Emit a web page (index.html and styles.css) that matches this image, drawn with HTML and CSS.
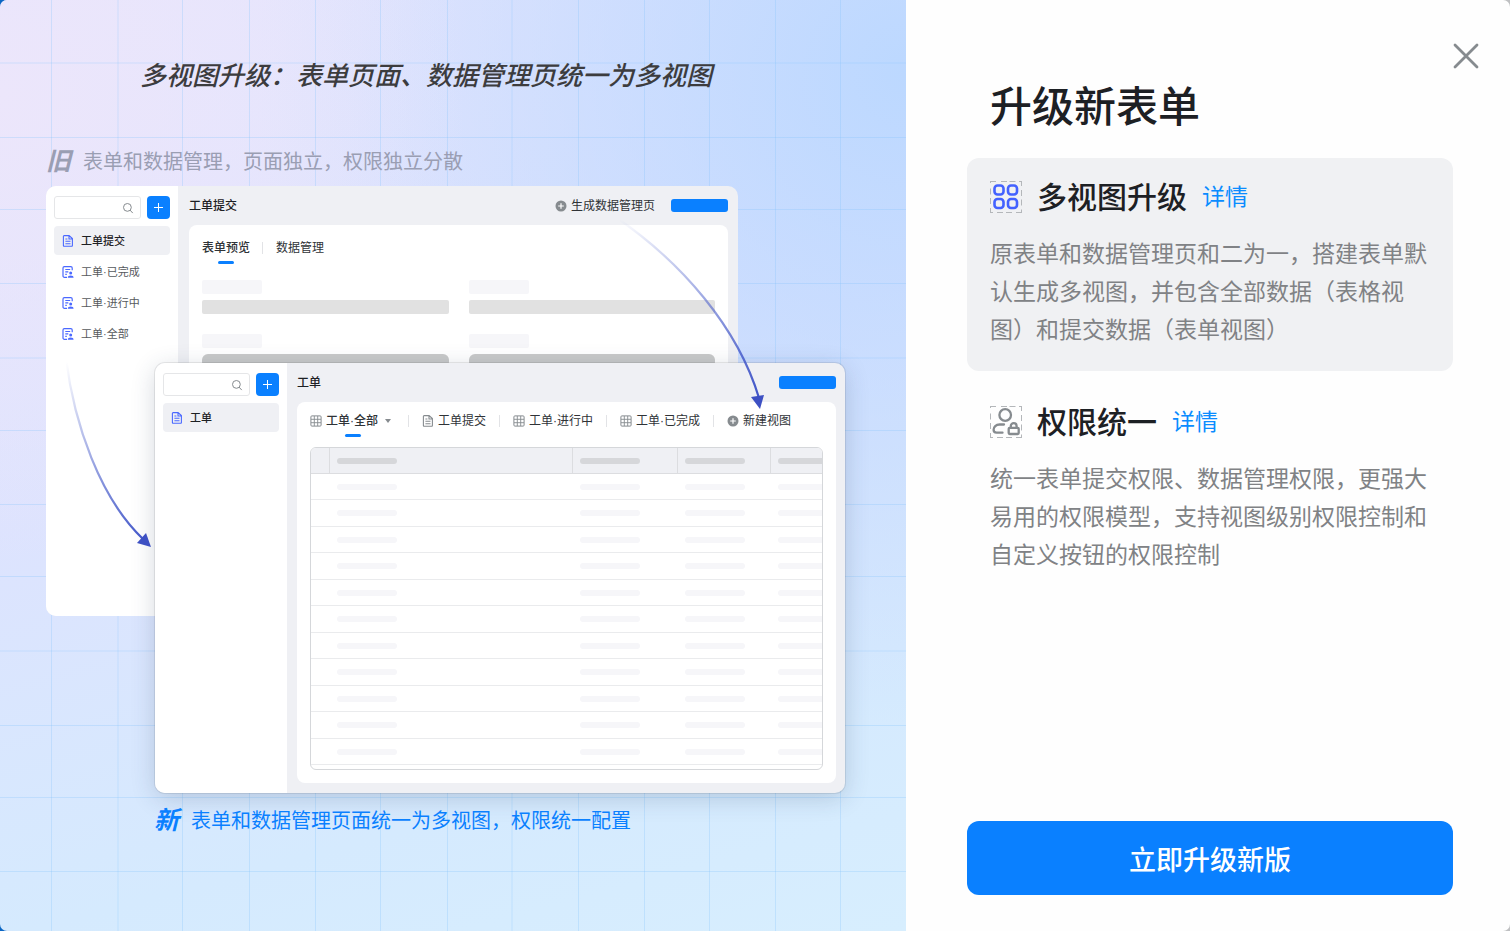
FILE: index.html
```
<!DOCTYPE html>
<html lang="zh-CN">
<head>
  <meta charset="UTF-8">
  <meta name="viewport" content="width=device-width, initial-scale=1.0">
  <title>升级新表单</title>
  <link rel="stylesheet" href="styles.css">
</head>
<body>

  <!-- shared icons -->
  <svg class="sprite" aria-hidden="true">
    <symbol id="i-search" viewBox="0 0 12 12">
      <circle cx="5.4" cy="5.4" r="3.9" fill="none" stroke="#868b8f" stroke-width="1"/>
      <path d="M8.2 8.3l2.3 2.5" stroke="#868b8f" stroke-width="1" stroke-linecap="round"/>
    </symbol>
    <symbol id="i-doc" viewBox="0 0 12 12">
      <path d="M2.1.6h5l3.300 3v7a.7.7 0 0 1-.7.7H2.100a.7.7 0 0 1-.7-.7V1.300a.7.7 0 0 1 .7-.7zM7 .8v3.200h3.200M3.400 4h2M3.400 6.300h5.100M3.400 8.700h5.100" fill="none" stroke="currentColor" stroke-width="1.100"/>
    </symbol>
    <symbol id="i-form" viewBox="0 0 12 12">
      <path d="M5 11.300H2.400A1.400 1.400 0 0 1 1 9.900V2.100A1.400 1.400 0 0 1 2.400.7h6.400a1.400 1.400 0 0 1 1.400 1.400V4.300M3.300 3.500h4.900M3.300 5.900h3M3.300 8.300h1.500" fill="none" stroke="currentColor" stroke-width="1.200"/>
      <circle cx="8.700" cy="7.100" r="1.500" fill="currentColor"/>
      <path d="M5.800 11.700c0-1.500 1.100-2.300 2.900-2.300s2.900.8 2.900 2.300z" fill="currentColor"/>
    </symbol>
    <symbol id="i-grid" viewBox="0 0 12 12">
      <rect x=".9" y=".9" width="10.200" height="10.200" rx="1" fill="none" stroke="currentColor"/>
      <path d="M1 4.300h10M1 7.700h10M4.300 1v10M7.700 1v10" stroke="currentColor" stroke-width=".9"/>
    </symbol>
    <symbol id="i-plus" viewBox="0 0 12 12">
      <circle cx="6" cy="6" r="5.500" fill="#868b8f"/>
      <path d="M6 3.200v5.600M3.200 6h5.600" stroke="#fff" stroke-width="1.200"/>
    </symbol>
  </svg>

  <main class="modal">
    <section class="promo">
      <svg class="lines" viewBox="0 0 907 931" preserveAspectRatio="xMinYMin slice" aria-hidden="true">
        <path d="M51.500 0v931M118 0v931M182.500 0v931M249.500 0v931M315.500 0v931M380.500 0v931M447.500 0v931M512 0v931M578.500 0v931M644.500 0v931M709.500 0v931M775.500 0v931M840.500 0v931M0 63h907M0 137.500h907M0 209.500h907M0 283.500h907M0 358h907M0 430.500h907M0 504.500h907M0 576.500h907M0 651h907M0 725.500h907M0 797.500h907M0 871.500h907"/>
      </svg>
      <h2 class="promo-title">多视图升级：表单页面、数据管理页统一为多视图</h2>

      <p class="caption caption-old"><em>旧</em><span>表单和数据管理，页面独立，权限独立分散</span></p>

      <div class="stage">
        <div class="window window-old">
          <aside class="side">
            <div class="tools">
              <label class="search"><input type="text" aria-label="搜索"><svg><use href="#i-search"/></svg></label>
              <button class="add" aria-label="新建"></button>
            </div>
            <a href="#" class="item active"><svg><use href="#i-doc"/></svg>工单提交</a>
            <a href="#" class="item"><svg><use href="#i-form"/></svg>工单·已完成</a>
            <a href="#" class="item"><svg><use href="#i-form"/></svg>工单·进行中</a>
            <a href="#" class="item"><svg><use href="#i-form"/></svg>工单·全部</a>
          </aside>
          <div class="main">
            <header class="bar">
              <span class="bar-title">工单提交</span>
              <button class="tab make"><svg><use href="#i-plus"/></svg>生成数据管理页</button>
              <button class="blue" aria-label="保存"></button>
            </header>
            <div class="panel">
              <nav class="tabs tabs-old">
                <button class="tab on">表单预览</button>
                <button class="tab">数据管理</button>
              </nav>
              <div class="fields">
                <div class="field"><i></i><b></b></div>
                <div class="field"><i></i><b></b></div>
                <div class="field dim"><i></i><b></b></div>
                <div class="field dim"><i></i><b></b></div>
              </div>
            </div>
          </div>
        </div>

        <div class="window window-new">
          <aside class="side">
            <div class="tools">
              <label class="search"><input type="text" aria-label="搜索"><svg><use href="#i-search"/></svg></label>
              <button class="add" aria-label="新建"></button>
            </div>
            <a href="#" class="item active"><svg><use href="#i-doc"/></svg>工单</a>
          </aside>
          <div class="main">
            <header class="bar">
              <span class="bar-title">工单</span>
              <button class="blue" aria-label="保存"></button>
            </header>
            <div class="panel">
              <nav class="tabs tabs-new">
                <button class="tab on"><svg><use href="#i-grid"/></svg>工单·全部<span class="caret"></span></button>
                <button class="tab"><svg><use href="#i-doc"/></svg>工单提交</button>
                <button class="tab"><svg><use href="#i-grid"/></svg>工单·进行中</button>
                <button class="tab"><svg><use href="#i-grid"/></svg>工单·已完成</button>
                <button class="tab"><svg><use href="#i-plus"/></svg>新建视图</button>
              </nav>
              <div class="sheet">
                <table>
                  <thead>
                    <tr><th></th><th><i></i></th><th><i></i></th><th><i></i></th><th><i></i></th></tr>
                  </thead>
                  <tbody>
                    <tr><td></td><td><i></i></td><td><i></i></td><td><i></i></td><td><i></i></td></tr>
                    <tr><td></td><td><i></i></td><td><i></i></td><td><i></i></td><td><i></i></td></tr>
                    <tr><td></td><td><i></i></td><td><i></i></td><td><i></i></td><td><i></i></td></tr>
                    <tr><td></td><td><i></i></td><td><i></i></td><td><i></i></td><td><i></i></td></tr>
                    <tr><td></td><td><i></i></td><td><i></i></td><td><i></i></td><td><i></i></td></tr>
                    <tr><td></td><td><i></i></td><td><i></i></td><td><i></i></td><td><i></i></td></tr>
                    <tr><td></td><td><i></i></td><td><i></i></td><td><i></i></td><td><i></i></td></tr>
                    <tr><td></td><td><i></i></td><td><i></i></td><td><i></i></td><td><i></i></td></tr>
                    <tr><td></td><td><i></i></td><td><i></i></td><td><i></i></td><td><i></i></td></tr>
                    <tr><td></td><td><i></i></td><td><i></i></td><td><i></i></td><td><i></i></td></tr>
                    <tr><td></td><td><i></i></td><td><i></i></td><td><i></i></td><td><i></i></td></tr>
                  </tbody>
                </table>
              </div>
            </div>
          </div>
        </div>

        <!-- arrows from the old window to the new one -->
        <svg class="arrows" viewBox="0 0 800 607" aria-hidden="true">
          <defs>
            <linearGradient id="fade1" gradientUnits="userSpaceOnUse" x1="575" y1="32" x2="714" y2="210">
              <stop offset="0" stop-color="#4055c8" stop-opacity="0"/>
              <stop offset="1" stop-color="#4055c8"/>
            </linearGradient>
            <linearGradient id="fade2" gradientUnits="userSpaceOnUse" x1="20" y1="176" x2="100" y2="355">
              <stop offset="0" stop-color="#4055c8" stop-opacity="0"/>
              <stop offset="1" stop-color="#4055c8"/>
            </linearGradient>
          </defs>
          <path d="M568 30C636 76 692 142 713 212" fill="none" stroke="url(#fade1)" stroke-width="2.200"/>
          <path d="M705 211l13-2-4 14z" fill="#3d50c3"/>
          <path d="M20 172C28 238 54 312 97 353" fill="none" stroke="url(#fade2)" stroke-width="2.200"/>
          <path d="M91 357l9-10 5 14z" fill="#3d50c3"/>
        </svg>
      </div>

      <p class="caption caption-new"><em>新</em><span>表单和数据管理页面统一为多视图，权限统一配置</span></p>
    </section>

    <section class="info">
      <button class="close" aria-label="关闭">
        <svg viewBox="0 0 28 28"><path d="M3 3l22 22M25 3L3 25" stroke="#868b8f" stroke-width="2.800" stroke-linecap="round"/></svg>
      </button>
      <h1>升级新表单</h1>

      <article class="card selected">
        <h3>
          <svg viewBox="0 0 32 32" fill="none">
            <path d="M0 .5h6M11 .5h6M19.500 .5h6M29 .5h3M0 31.500h3M7 31.500h6M16 31.500h6M26 31.500h6M.5 0v2M.5 7.500v6M.5 17v6M.5 27v5M31.500 0v5M31.500 9v6M31.500 18.500v6M31.500 28.500v3.500" stroke="#b4b7ba"/>
            <g stroke="#4362ff" stroke-width="2.600">
              <rect x="4.500" y="4.500" width="9" height="9" rx="3"/>
              <rect x="18" y="4.500" width="9" height="9" rx="3"/>
              <rect x="4.500" y="18" width="9" height="9" rx="3"/>
              <rect x="18" y="18" width="9" height="9" rx="3"/>
            </g>
          </svg>
          多视图升级 <a href="#">详情</a>
        </h3>
        <p>原表单和数据管理页和二为一，搭建表单默认生成多视图，并包含全部数据（表格视图）和提交数据（表单视图）</p>
      </article>

      <article class="card">
        <h3>
          <svg viewBox="0 0 32 32" fill="none">
            <path d="M0 .5h6M11 .5h6M19.500 .5h6M29 .5h3M0 31.500h3M7 31.500h6M16 31.500h6M26 31.500h6M.5 0v2M.5 7.500v6M.5 17v6M.5 27v5M31.500 0v5M31.500 9v6M31.500 18.500v6M31.500 28.500v3.500" stroke="#b4b7ba"/>
            <g stroke="#868b8f" stroke-width="2.300">
              <circle cx="15.200" cy="9" r="5.800"/>
              <path d="M14 18.500H9.500C6 18.500 3.600 21 3.600 23.800c0 1.800 1.300 2.900 2.900 2.900h6" stroke-linecap="round"/>
              <rect x="18.700" y="21.800" width="10" height="6.200" rx="1"/>
              <path d="M20.800 21.500v-1.400a2.900 2.900 0 0 1 5.800 0v1.400"/>
            </g>
          </svg>
          权限统一 <a href="#">详情</a>
        </h3>
        <p>统一表单提交权限、数据管理权限，更强大易用的权限模型，支持视图级别权限控制和自定义按钮的权限控制</p>
      </article>

      <button class="submit">立即升级新版</button>
    </section>
  </main>

</body>
</html>
```
FILE: styles.css
```
* {
  box-sizing: border-box;
}
body {
  margin: 0;
  font-family: "Noto Sans CJK SC", sans-serif;
  background: linear-gradient(90deg, #0b66c3 50%, #bfc0c2 50%);
  color: #1d2024;
}
h1, h2, h3, p {
  margin: 0;
}
a {
  color: inherit;
  text-decoration: none;
}
button {
  padding: 0;
  border: none;
  background: none;
  font: inherit;
  color: inherit;
  cursor: pointer;
}
i, b {
  display: block;
}
.sprite {
  display: none;
}
.modal {
  display: flex;
  min-height: 100vh;
  border-radius: 7px;
  overflow: hidden;
}

/* left side */
.promo {
  position: relative;
  flex: 0 0 60%;
  padding: 55px 46px 0;
  background:
    radial-gradient(circle at 0 10%, #ece6fb 0%, rgba(236,230,251,0) 38%),
    radial-gradient(circle at 100% 8%, #bcd8ff 0%, rgba(188,216,255,0) 52%),
    linear-gradient(165deg, #e6e5fd 0%, #dde3fe 45%, #d5eafe 80%, #d7eefe 100%);
}
.lines {
  position: absolute;
  inset: 0;
  width: 100%;
  height: 100%;
  stroke: rgba(130,195,252,0.28);
  stroke-width: 1;
}
.promo-title {
  position: relative;
  font-size: 26px;
  line-height: 38px;
  font-weight: 500;
  font-style: italic;
  color: #3c3c3e;
  text-align: center;
  margin-right: 54px;
  white-space: nowrap;
}
.caption {
  position: relative;
  display: flex;
  align-items: flex-start;
  gap: 12px;
  font-size: 20px;
  line-height: 30px;
  white-space: nowrap;
}
.caption em {
  font-size: 25px;
  line-height: 26px;
  font-weight: 700;
}
.caption-old {
  margin-top: 53px;
  color: #9a9eb3;
}
.caption-new {
  margin: 12px 0 0 108px;
  color: #0a80ff;
}
.stage {
  position: relative;
  height: 607px;
  margin-top: 10px;
}
.window {
  position: absolute;
  display: flex;
  width: 692px;
  height: 430px;
  border-radius: 10px;
  overflow: hidden;
  background: #eff0f4;
  font-family: "Liberation Sans", "Noto Sans CJK SC", sans-serif;
  font-size: 12px;
  line-height: 18px;
}
.window-old {
  top: 0;
  left: 0;
}
.window-new {
  top: 177px;
  left: 109px;
  width: 690px;
  box-shadow: 0 0 0 1px rgba(0,0,0,0.08), 0 5px 24px rgba(40,60,90,0.2);
}
.side {
  display: flex;
  flex-direction: column;
  flex: 0 0 132px;
  padding: 10px 8px;
  background: #fff;
}
.tools {
  display: flex;
  gap: 6px;
  margin-bottom: 7px;
}
.search {
  display: flex;
  align-items: center;
  width: 87px;
  height: 23px;
  padding-right: 6px;
  border: 1px solid #e5e6e8;
  border-radius: 3px;
}
.search input {
  flex: 1;
  min-width: 0;
  border: none;
  outline: none;
  background: none;
}
.search svg, .item svg, .tab svg {
  flex: none;
  width: 12px;
  height: 12px;
}
.add {
  width: 23px;
  height: 23px;
  border-radius: 4px;
  background:
    linear-gradient(#fff, #fff) center / 9px 1px no-repeat,
    linear-gradient(#fff, #fff) center / 1px 9px no-repeat,
    #0a80ff;
}
.item {
  display: flex;
  align-items: center;
  gap: 7px;
  height: 29px;
  margin-bottom: 2px;
  padding-left: 8px;
  border-radius: 4px;
  font-size: 11px;
  color: #56595d;
}
.item svg {
  color: #4a68ff;
}
.item.active {
  background: #eff0f4;
  color: #1d2024;
  font-weight: 500;
}
.main {
  flex: 1;
  display: flex;
  flex-direction: column;
  min-width: 0;
  padding: 0 10px 10px 11px;
}
.window-new .main {
  padding: 0 9px 10px 10px;
}
.bar {
  display: flex;
  align-items: center;
  height: 39px;
}
.bar-title {
  flex: 1;
  font-weight: 500;
}
.make {
  margin-right: 16px;
}
.blue {
  width: 57px;
  height: 13px;
  border-radius: 3px;
  background: #0a80ff;
}
.panel {
  flex: 1;
  padding: 10px 13px 13px;
  border-radius: 8px;
  background: #fff;
}
.tabs {
  display: flex;
}
.tab {
  position: relative;
  display: flex;
  align-items: center;
  gap: 4px;
  color: #2f3337;
}
.tab svg {
  color: #868b8f;
}
.tabs .tab + .tab::before {
  content: "";
  width: 1px;
  height: 12px;
  background: #e2e3e6;
}
.tabs-old {
  padding-top: 4px;
}
.tabs-old .tab + .tab {
  gap: 13px;
  margin-left: 12px;
}
.tabs-new .tab + .tab::before {
  margin-right: 9px;
}
.tabs-new .tab + .tab {
  margin-left: 13px;
}
.tab.on {
  font-weight: 500;
}
/* marker under the current tab */
.tab.on::after {
  content: "";
  position: absolute;
  left: 50%;
  bottom: -7px;
  width: 16px;
  height: 3px;
  margin-left: -8px;
  border-radius: 2px;
  background: #0a80ff;
}
.caret {
  margin: 0 4px 0 3px;
  border: 3px solid transparent;
  border-top: 4px solid #868b8f;
  border-bottom: 0;
}
.fields {
  display: grid;
  grid-template-columns: 1fr 1fr;
  gap: 20px;
  margin-top: 23px;
}
.field i {
  width: 60px;
  height: 14px;
  border-radius: 2px;
  background: #f6f6f9;
}
.field b {
  height: 14px;
  margin-top: 6px;
  border-radius: 2px;
  background: #e1e1e1;
}
.field.dim b {
  border-radius: 6px;
  background: #c8c9c9;
}
.sheet {
  height: 323px;
  margin-top: 17px;
  border: 1px solid #d5d7da;
  border-radius: 6px;
  overflow: hidden;
}
.sheet table {
  width: 100%;
  table-layout: fixed;
  border-collapse: separate;
  border-spacing: 0;
}
.sheet th, .sheet td {
  padding: 0 0 0 7px;
  overflow: hidden;
}
.sheet th {
  height: 26px;
  background: #eff0f4;
  border-bottom: 1px solid #dcdde0;
}
.sheet th + th {
  border-left: 1px solid #dcdde0;
}
.sheet td {
  height: 26px;
  padding-left: 8px;
  border-bottom: 1px solid #eaebed;
}
.sheet tbody tr:nth-child(even) td {
  height: 27px;
}
.sheet th:nth-child(1) { width: 18px; }
.sheet th:nth-child(3) { width: 105px; }
.sheet th:nth-child(4) { width: 93px; }
.sheet th:nth-child(5) { width: 52px; }
.sheet i {
  width: 60px;
  height: 6px;
  border-radius: 3px;
  background: #f6f6f9;
}
.sheet th i {
  background: #d6d7da;
}
.arrows {
  position: absolute;
  top: 0;
  left: 0;
  width: 800px;
  height: 607px;
  pointer-events: none;
}

/* right side */
.info {
  position: relative;
  flex: 1;
  display: flex;
  flex-direction: column;
  padding: 74px 57px 36px 61px;
  background: #fefefe;
}
.close {
  position: absolute;
  top: 42px;
  right: 30px;
  width: 28px;
  height: 28px;
}
.close svg {
  display: block;
}
h1 {
  margin: 0 23px 24px;
  font-size: 42px;
  line-height: 60px;
  font-weight: 500;
}
.card {
  padding: 15px 23px 24px;
  border-radius: 12px;
  margin-bottom: 12px;
}
.card.selected {
  background: #f0f1f3;
}
.card h3 {
  display: flex;
  align-items: center;
  gap: 15px;
  margin-bottom: 16px;
  font-size: 30px;
  line-height: 44px;
  font-weight: 500;
}
.card h3 svg {
  width: 32px;
  height: 32px;
  margin-top: 4px;
}
.card h3 a {
  font-size: 23px;
  font-weight: 400;
  color: #0a8cff;
}
.card p {
  font-size: 23px;
  line-height: 38px;
  font-weight: 400;
  color: #808285;
}
.submit {
  height: 74px;
  margin-top: auto;
  border-radius: 12px;
  background: #0a80ff;
  color: #fff;
  font-size: 27px;
  font-weight: 500;
}
```
